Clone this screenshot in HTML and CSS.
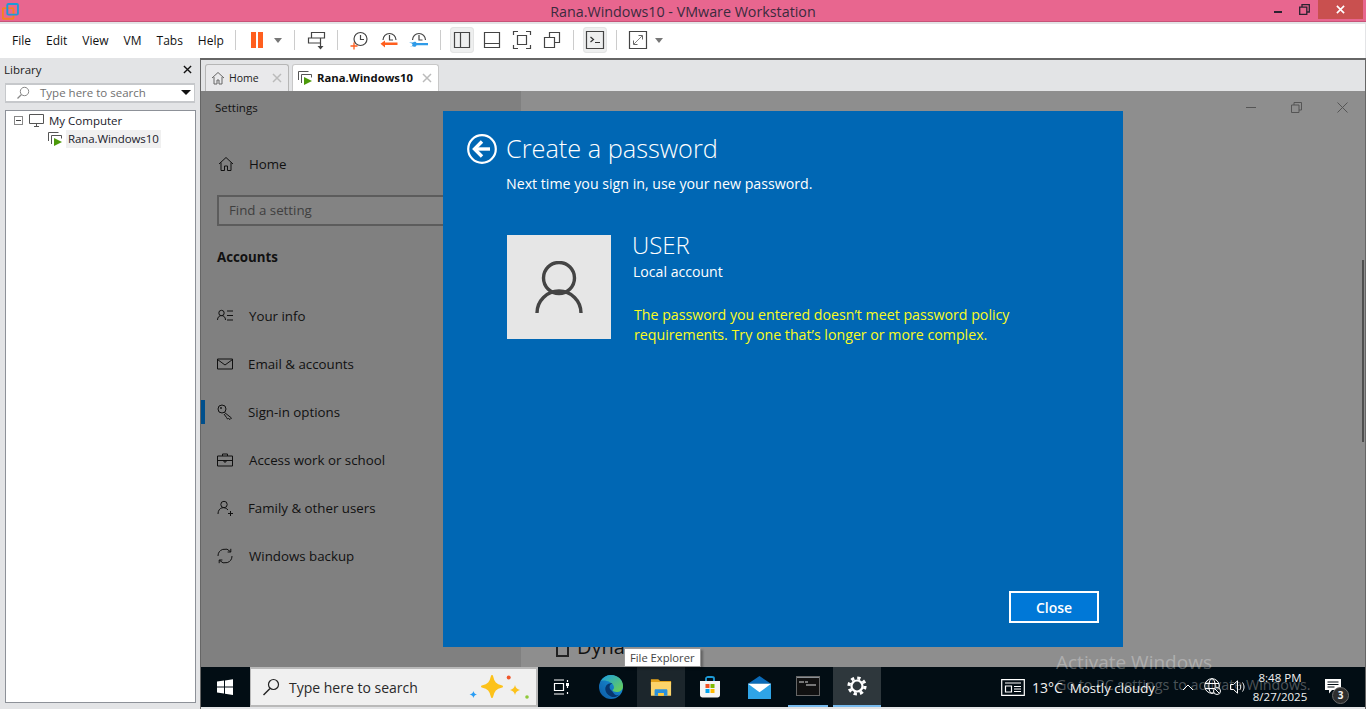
FILE: index.html
```html
<!DOCTYPE html>
<html lang="en">
<head>
<meta charset="utf-8">
<title>Rana.Windows10 - VMware Workstation</title>
<link rel="stylesheet" href="styles.css">
</head>
<body>
<div class="app">
  <header class="titlebar">
    <svg class="app-logo" viewBox="0 0 16 16"><rect x="0.8" y="4.8" width="10" height="10" rx="1" fill="none" stroke="#f58220" stroke-width="1.8"/><rect x="5" y="0.9" width="10" height="10" rx="1" fill="none" stroke="#1d9ad6" stroke-width="1.8"/></svg>
    <div class="title-text">Rana.Windows10 - VMware Workstation</div>
    <div class="win-ctrls">
      <span class="win-min"></span>
      <svg class="win-restore" viewBox="0 0 11 11"><path d="M0.7 3.2h7.1v7.1H0.7z M3 3V0.7h7.3V8H8" fill="none" stroke="#2b2230" stroke-width="1.3"/></svg>
      <div class="win-close"><svg viewBox="0 0 10 10" width="9" height="9"><path d="M1 1l8 8M9 1l-8 8" stroke="#fff" stroke-width="1.8"/></svg></div>
    </div>
  </header>

  <nav class="toolbar">
    <ul class="menu">
      <li>File</li><li>Edit</li><li>View</li><li>VM</li><li>Tabs</li><li>Help</li>
    </ul>
    <span class="sep"></span>
    <span class="tb-btn"><svg viewBox="0 0 24 26"><rect x="6" y="5" width="5" height="16" fill="#ff5f1f"/><rect x="13" y="5" width="5" height="16" fill="#ff5f1f"/></svg></span>
    <span class="tb-arrow"></span>
    <span class="sep sep--wide"></span>
    <span class="tb-btn"><svg viewBox="0 0 24 26"><path d="M7.500 5.500h13v5.500h-13z M4.500 11h12v5h-12z" fill="none" stroke="#444" stroke-width="1.200"/><path d="M16.500 16v4" stroke="#444" stroke-width="1.200"/><path d="M13.500 19h6l-3 3.500z" fill="#444"/></svg></span>
    <span class="sep"></span>
    <span class="tb-btn"><svg viewBox="0 0 24 26"><circle cx="13.500" cy="12" r="6.500" fill="none" stroke="#444" stroke-width="1.200"/><path d="M13.500 8v4.500h3.500" fill="none" stroke="#444" stroke-width="1.200"/><path d="M3.500 19h7M7 15.500v7" stroke="#ff5f1f" stroke-width="1.300"/></svg></span>
    <span class="tb-btn"><svg viewBox="0 0 24 26"><path d="M6 13a6.500 6.500 0 1 1 13 0" fill="none" stroke="#444" stroke-width="1.200"/><path d="M12.500 8v5h3.500" fill="none" stroke="#444" stroke-width="1.200"/><path d="M8 15.500h12.500v2.500H8v2.500l-4.500-3.700 4.500-3.300z" fill="#ff5f1f"/></svg></span>
    <span class="tb-btn"><svg viewBox="0 0 24 26"><path d="M5.500 13a6.500 6.500 0 1 1 13 0" fill="none" stroke="#444" stroke-width="1.200"/><path d="M12 8v5h3.500" fill="none" stroke="#444" stroke-width="1.200"/><path d="M2 15.500h4c1-1 3-1 3.500.5h11.500v2.200H9.500c-.5 1.800-2.500 2-3.500 1H3c1 0 2.500 0 2.500-1.600C5.500 16.500 4 16 2 15.500z" fill="#2f9be8"/></svg></span>
    <span class="sep"></span>
    <span class="tb-btn tb-btn--on"><svg viewBox="0 0 24 26"><path d="M4.500 5.500h15v15h-15z M10.500 5.500v15" fill="none" stroke="#444" stroke-width="1.200"/></svg></span>
    <span class="tb-btn"><svg viewBox="0 0 24 26"><path d="M4.500 5.500h15v15h-15z M4.500 16.500h15" fill="none" stroke="#444" stroke-width="1.200"/></svg></span>
    <span class="tb-btn"><svg viewBox="0 0 24 26"><path d="M3.500 8V4.500H8 M16 4.500h4.500V8 M20.500 18v3.500H16 M8 21.500H3.500V18 M7.500 8.500h9v9h-9z" fill="none" stroke="#444" stroke-width="1.200"/></svg></span>
    <span class="tb-btn"><svg viewBox="0 0 24 26"><path d="M4.500 10.500h10v10h-10z M9.500 10V5.500h10v10H15" fill="none" stroke="#444" stroke-width="1.200"/></svg></span>
    <span class="sep"></span>
    <span class="tb-btn tb-btn--on"><svg viewBox="0 0 24 26"><path d="M3.500 4.500h17v17h-17z" fill="none" stroke="#444" stroke-width="1.200"/><path d="M7.500 10l3 2.500-3 2.500" fill="none" stroke="#333" stroke-width="1.200"/><path d="M12 15.500h5" stroke="#333" stroke-width="1.200"/></svg></span>
    <span class="sep"></span>
    <span class="tb-btn"><svg viewBox="0 0 24 26"><path d="M3.500 4.500h17v17h-17z" fill="none" stroke="#444" stroke-width="1.200"/><path d="M8 17l8-8" stroke="#888" stroke-width="1"/><path d="M12.500 8.500h4v4 M7.500 13.500v4h4" fill="none" stroke="#666" stroke-width="1"/></svg></span>
    <span class="tb-arrow"></span>
  </nav>

  <div class="workspace">
    <aside class="library">
      <div class="library-head"><span>Library</span><svg viewBox="0 0 10 10" width="9" height="9"><path d="M1 1l8 8M9 1l-8 8" stroke="#111" stroke-width="1.500"/></svg></div>
      <div class="lib-search">
        <svg viewBox="0 0 14 14" width="14" height="14"><circle cx="8.500" cy="5.500" r="4.200" fill="none" stroke="#888" stroke-width="1"/><path d="M5.500 8.500L1.500 12.500" stroke="#888" stroke-width="1.200"/></svg>
        <span class="lib-search-text">Type here to search</span>
        <span class="lib-search-arrow"></span>
      </div>
      <div class="tree">
        <div class="tree-row">
          <span class="expander"></span>
          <svg class="tree-pc" viewBox="0 0 15 13"><path d="M.5.500h14v9H.5z M5 12.500h5 M7.500 9.500v3" fill="none" stroke="#555" stroke-width="1"/></svg>
          <span>My Computer</span>
        </div>
        <div class="tree-row tree-row--vm">
          <svg class="tree-vm" viewBox="0 0 15 14"><path d="M.5 9V.500h10M3.500 12V3.500h10v3" fill="none" stroke="#555" stroke-width="1"/><path d="M6 6l8 4-8 4z" fill="#4c9a0a"/></svg>
          <span class="tree-vm-label">Rana.Windows10</span>
        </div>
      </div>
    </aside>

    <main class="vm-panel">
      <div class="tabs">
        <div class="tab">
          <svg viewBox="0 0 14 14" width="14" height="14"><path d="M1 7l6-5.500L13 7M3 6v7h3V9h2v4h3V6" fill="none" stroke="#666" stroke-width="1"/></svg>
          <span class="tab-label">Home</span>
          <svg class="tab-x" viewBox="0 0 10 10"><path d="M1 1l8 8M9 1l-8 8" stroke="#bbb" stroke-width="1.500"/></svg>
        </div>
        <div class="tab tab--active">
          <svg viewBox="0 0 15 14" width="15" height="14"><path d="M.5 9V.500h10M3.500 12V3.500h10v3" fill="none" stroke="#555" stroke-width="1"/><path d="M6 6l8 4-8 4z" fill="#4c9a0a"/></svg>
          <span class="tab-label tab-label--bold">Rana.Windows10</span>
          <svg class="tab-x" viewBox="0 0 10 10"><path d="M1 1l8 8M9 1l-8 8" stroke="#bbb" stroke-width="1.500"/></svg>
        </div>
      </div>

      <div class="screen">
        <div class="settings">
          <section class="set-nav">
            <div class="set-title">Settings</div>
            <div class="set-item set-item--home">
              <svg viewBox="0 0 16 16"><path d="M1 8l7-6.500L15 8M3 6.500V14.500h3.500V10h3v4.500H13V6.500" fill="none" stroke="#111" stroke-width="1"/></svg>
              <span>Home</span>
            </div>
            <div class="set-search">Find a setting</div>
            <div class="set-heading">Accounts</div>
            <div class="set-item">
              <svg viewBox="0 0 16 16"><circle cx="4.500" cy="5" r="2.700" fill="none" stroke="#111" stroke-width="1"/><path d="M.5 12c0-6 8-6 8 0 M10 3h6M10 7.500h6M10 12h6" fill="none" stroke="#111" stroke-width="1"/></svg>
              <span>Your info</span>
            </div>
            <div class="set-item set-item--tight">
              <svg viewBox="0 0 16 16"><path d="M.5 3h15v10H.5z M.5 3.500L8 9l7.500-5.500" fill="none" stroke="#111" stroke-width="1"/></svg>
              <span>Email &amp; accounts</span>
            </div>
            <div class="set-item set-item--tight set-item--current">
              <svg viewBox="0 0 16 16"><circle cx="5" cy="5" r="4" fill="none" stroke="#111" stroke-width="1"/><path d="M7.500 8.500l7 5.500-1.500 1.500-1.500-1-1 .5-1-1.500L7 10" fill="none" stroke="#111" stroke-width="1"/><circle cx="4" cy="4" r=".9" fill="#111"/></svg>
              <span>Sign-in options</span>
            </div>
            <div class="set-item">
              <svg viewBox="0 0 16 16"><path d="M.5 4h15v10H.5z M5.500 4V2h5v2 M.5 8.500h15 M7 8v2h2V8" fill="none" stroke="#111" stroke-width="1"/></svg>
              <span>Access work or school</span>
            </div>
            <div class="set-item set-item--tight">
              <svg viewBox="0 0 16 16"><circle cx="7" cy="4.500" r="3.200" fill="none" stroke="#111" stroke-width="1"/><path d="M1 14c0-7 7-8 10-4 M11 13.500h5M13.500 11v5" fill="none" stroke="#111" stroke-width="1"/></svg>
              <span>Family &amp; other users</span>
            </div>
            <div class="set-item">
              <svg viewBox="0 0 16 16"><path d="M1 8a7 7 0 0 1 12.500-4.300 M15 8a7 7 0 0 1-12.500 4.300 M13.800 .8v3.200h-3.200 M2.200 15.200V12h3.200" fill="none" stroke="#111" stroke-width="1"/></svg>
              <span>Windows backup</span>
            </div>
          </section>
          <section class="set-main">
            <div class="set-ctrls">
              <span class="set-min"></span>
              <svg viewBox="0 0 11 11" width="11" height="11"><path d="M.5 3h7.500v7.500H.5z M3 3V.5h7.500V8H8" fill="none" stroke="#555" stroke-width="1"/></svg>
              <svg viewBox="0 0 11 11" width="11" height="11"><path d="M.5.500l10 10M10.500.500l-10 10" stroke="#555" stroke-width="1"/></svg>
            </div>
            <div class="dyn-row"><span class="dyn-box"></span><span class="dyn-text">Dyna</span></div>
          </section>
          <span class="set-scroll"></span>
        </div>

        <footer class="taskbar">
          <div class="start"><svg viewBox="0 0 16 16" width="16" height="16"><path d="M0 2.600L7 1.600V7.600H0z M8 1.400L16 .2V7.600H8z M0 8.500H7V14.500L0 13.500z M8 8.500h8V16L8 14.700z" fill="#fff"/></svg></div>
          <div class="task-search">
            <svg viewBox="0 0 18 18" width="18" height="18"><circle cx="11.500" cy="6.500" r="5" fill="none" stroke="#222" stroke-width="1.200"/><path d="M8 10.500L1.500 17" stroke="#222" stroke-width="1.400"/></svg>
            <span class="task-search-text">Type here to search</span>
            <svg class="sparkle" viewBox="0 0 62 26" width="62" height="26"><path d="M24 2c1.500 7 3.500 9 10 10.500-6.500 1.500-8.500 3.500-10 10.500-1.500-7-3.500-9-10-10.500 6.500-1.500 8.500-3.500 10-10.500z" fill="#fcc21b" stroke="#fcc21b" stroke-width="2" stroke-linejoin="round"/><path d="M47 11c.7 3 2 4.300 5 5-3 .7-4.300 2-5 5-.7-3-2-4.300-5-5 3-.7 4.300-2 5-5z" fill="#fcc21b"/><path d="M5.500 17c.5 2 1 3 3.500 3.500-2.500.5-3 1.500-3.500 3.500-.5-2-1.500-3-4-3.500 2.500-.5 3.500-1.500 4-3.500z" fill="#2a9df4"/><circle cx="40.700" cy="3.500" r="2" fill="#f0562b"/><circle cx="59" cy="23" r="1.800" fill="#8fc93a"/></svg>
          </div>
          <div class="task-apps">
            <span class="task-app task-app--view"><svg viewBox="0 0 16 16" width="16" height="16"><path d="M1 1h10 M1 15h10 M1.500 4.500h9v7h-9z M14.500 1v2 M14.500 7v2 M14.500 13v2" fill="none" stroke="#fff" stroke-width="1.200"/><rect x="13" y="4" width="3" height="3" fill="#fff"/></svg></span>
            <span class="task-app task-app--edge"><svg viewBox="0 0 24 24" width="24" height="24"><defs><linearGradient id="eb" x1="0" y1="1" x2="1" y2="0"><stop offset="0" stop-color="#0c59a4"/><stop offset="1" stop-color="#1b9de2"/></linearGradient><linearGradient id="eg" x1="0" y1="0" x2="1" y2="1"><stop offset="0" stop-color="#1b9de2"/><stop offset="1" stop-color="#6ed34a"/></linearGradient></defs><circle cx="12" cy="12" r="12" fill="url(#eb)"/><path d="M2 6C5 1 9 0 12 0c7 0 12 5 12 11 0 4-3 6-6.500 6-2 0-4-.8-4-2 1.500-1 2-2.500 1-4.500C13 7 6 4.500 2 6z" fill="url(#eg)"/><path d="M13 16c-3.500-2-3-7 .5-7.500-4.500-1-8 2.500-7 7 1 4 6 8 11 6 1-.4 2-1 2.800-1.900-3 1.500-5 .3-7.300-3.600z" fill="#07366f"/></svg></span>
            <span class="task-app task-app--explorer"><svg viewBox="0 0 24 20" width="22" height="19"><path d="M1 1h8l2 2h12v4H1z" fill="#e3a21a"/><path d="M1 4h22v15H1z" fill="#fcd46a"/><path d="M5 13.500c0-1 .5-1.500 1.500-1.500h11c1 0 1.500.5 1.500 1.500V19h-4v-3H9v3H5z" fill="#2b90d9"/><path d="M9 16h6v3H9z" fill="#ffc93a"/></svg></span>
            <span class="task-app task-app--store"><svg viewBox="0 0 22 22" width="22" height="22"><path d="M7 6V2.500C7 1.500 8 1 9 1h4c1 0 2 .5 2 1.500V6" fill="none" stroke="#1d9ad6" stroke-width="1.800"/><path d="M1 5h20v14c0 1.500-1 2.500-2.500 2.500h-15C2 21.500 1 20.500 1 19z" fill="#f4f4f4"/><rect x="6.500" y="8" width="4" height="4" fill="#f25022"/><rect x="11.500" y="8" width="4" height="4" fill="#7fba00"/><rect x="6.500" y="13" width="4" height="4" fill="#00a4ef"/><rect x="11.500" y="13" width="4" height="4" fill="#ffb900"/></svg></span>
            <span class="task-app task-app--mail"><svg viewBox="0 0 26 24" width="25" height="23"><path d="M13 0L1 8h24z" fill="#0a6ab8"/><path d="M1 8h24v16H1z" fill="#2fa4e7"/><path d="M1 8h24L13 17z" fill="#fff"/></svg></span>
            <span class="task-app task-app--cmd"><svg viewBox="0 0 24 20" width="24" height="20"><rect width="24" height="20" fill="#111"/><rect width="24" height="2" fill="#8a8f94"/><rect x=".5" y=".5" width="23" height="19" fill="none" stroke="#666"/><path d="M3 6h5M9 6h3M10 9h10" stroke="#ddd" stroke-width="1.200"/></svg></span>
            <span class="task-app task-app--gear"><svg viewBox="0 0 20 20" width="20" height="20"><circle cx="10" cy="10" r="5.500" fill="none" stroke="#fff" stroke-width="2.200"/><circle cx="10" cy="10" r="8" fill="none" stroke="#fff" stroke-width="3.200" stroke-dasharray="3.280 3"/></svg></span>
          </div>
          <div class="tray">
            <svg class="tray-news" viewBox="0 0 24 17" width="24" height="17"><path d="M.7.700h22.600v15.600H.7z M4 4h16" fill="none" stroke="#fff" stroke-width="1.200"/><path d="M4.500 7h6v6h-6z" fill="none" stroke="#fff" stroke-width="1.200"/><path d="M13 7.500h7M13 10h7M13 12.500h7" stroke="#fff" stroke-width="1.200"/></svg>
            <span class="tray-weather"><span class="tray-temp">13°C</span>Mostly cloudy</span>
            <svg class="tray-chevron" viewBox="0 0 12 7" width="12" height="7"><path d="M1 6l5-5 5 5" fill="none" stroke="#fff" stroke-width="1"/></svg>
            <svg class="tray-globe" viewBox="0 0 18 18" width="18" height="18"><circle cx="8" cy="8" r="7.300" fill="none" stroke="#fff" stroke-width="1"/><ellipse cx="8" cy="8" rx="3.200" ry="7.300" fill="none" stroke="#fff" stroke-width="1"/><path d="M1 5.500h14M1 10.500h14" stroke="#fff" stroke-width="1"/><circle cx="13" cy="13" r="3.500" fill="#020d14" stroke="#fff" stroke-width="1"/><path d="M11 11l4 4" stroke="#fff" stroke-width="1"/></svg>
            <svg class="tray-sound" viewBox="0 0 16 14" width="16" height="14"><path d="M.5 4.500h3L7.500.8v12.400L3.500 9.500h-3z M10 4.500c1 1.500 1 3.500 0 5 M12.500 2.500c2 3 2 6 0 9" fill="none" stroke="#fff" stroke-width="1"/></svg>
            <div class="tray-clock"><span>8:48 PM</span><span>8/27/2025</span></div>
            <div class="tray-notify">
              <svg viewBox="0 0 16 15" width="16" height="15"><path d="M0 0h16v11H7l-3 3.500V11H0z" fill="#fff"/><path d="M2.500 3h11M2.500 5.500h11M2.500 8h7" stroke="#020d14" stroke-width="1"/></svg>
              <span class="tray-badge">3</span>
            </div>
          </div>
        </footer>

        <div class="dialog">
          <div class="dlg-head">
            <svg viewBox="0 0 30 30" width="30" height="30"><circle cx="15" cy="15" r="13.800" fill="none" stroke="#fff" stroke-width="2.200"/><path d="M7 15h16" stroke="#fff" stroke-width="3.400"/><path d="M15 7.500L7.500 15l7.500 7.500" fill="none" stroke="#fff" stroke-width="3.400"/></svg>
            <h1>Create a password</h1>
          </div>
          <p class="dlg-sub">Next time you sign in, use your new password.</p>
          <div class="dlg-user">
            <div class="avatar"><svg viewBox="0 0 48 53" width="48" height="53"><circle cx="24" cy="17" r="15.500" fill="none" stroke="#444" stroke-width="3.400"/><path d="M2 52A22 22 0 0 1 46 52" fill="none" stroke="#444" stroke-width="3.400"/></svg></div>
            <div class="user-info">
              <div class="user-name">USER</div>
              <div class="user-type">Local account</div>
              <p class="user-error">The password you entered doesn’t meet password policy requirements. Try one that’s longer or more complex.</p>
            </div>
          </div>
          <div class="dlg-foot"><button class="dlg-close">Close</button></div>
        </div>

        <div class="tooltip">File Explorer</div>
        <div class="watermark"><div class="wm-title">Activate Windows</div><div class="wm-sub">Go to PC settings to activate Windows.</div></div>
      </div>
    </main>
  </div>
</div>
</body>
</html>
```
FILE: styles.css
```css
* { box-sizing: border-box; }
html, body { margin: 0; height: 100%; overflow: hidden; }
body { font-family: "Open Sans", "Noto Sans", "Liberation Sans", sans-serif; color: #111; background: #e3e4e6; }
svg { display: block; flex: none; }

.app { width: 1366px; height: 709px; display: flex; flex-direction: column; }

/* Host title bar */
.titlebar { height: 24px; flex: none; background: #e8668f; border-bottom: 2px solid #e3e4e6; box-shadow: inset 0 -1px 0 #c75378; display: flex; align-items: flex-start; position: relative; }
.app-logo { width: 17px; height: 17px; margin: 3px 0 0 2px; }
.title-text { position: absolute; left: 0; right: 0; top: 2px; text-align: center; font-size: 14.300px; line-height: 20px; color: #3b2b3e; }
.win-ctrls { margin-left: auto; display: flex; align-items: flex-start; padding-right: 3px; }
.win-min { width: 8px; height: 2px; background: #2b2230; margin: 11px 0 0 0; }
.win-restore { width: 11px; height: 11px; margin: 4px 0 0 17px; }
.win-close { width: 45px; height: 19px; margin-left: 8px; background: #c9504f; display: flex; align-items: center; justify-content: center; }

/* Toolbar */
.toolbar { height: 34px; flex: none; background: #fff; display: flex; align-items: center; padding: 0 0 2px 12px; margin-right: 1px; }
.menu { list-style: none; width: 217px; margin: 0; padding: 0; display: flex; gap: 15px; font-size: 12px; color: #111; }
.sep { width: 1px; height: 20px; background: #ccc; margin: 0 6px; }
.sep--wide { margin-left: 10px; }
.tb-btn { width: 30px; display: flex; align-items: center; justify-content: center; }
.tb-btn svg { width: 24px; height: 26px; border-radius: 4px; }
.tb-btn--on svg { background: #eeefef; box-shadow: inset 0 0 0 1px #e3e4e4; }
.tb-arrow { width: 12px; height: 26px; display: flex; align-items: center; justify-content: center; }
.tb-arrow::after { content: ""; border-left: 4px solid transparent; border-right: 4px solid transparent; border-top: 5px solid #777; }

/* Workspace */
.workspace { flex: 1; min-height: 0; display: flex; }
.library { width: 200px; flex: none; display: flex; flex-direction: column; padding: 0 4px 6px 5px; }
.library-head { height: 25px; display: flex; align-items: center; justify-content: space-between; font-size: 11.500px; color: #222; margin-left: -1px; padding: 0 4px 2px 0; }
.lib-search { height: 20px; width: 190px; background: #fff; border: 1px solid #c6c8cb; border-width: 2px 1px; display: flex; align-items: center; padding: 0 0 1px 10px; }
.lib-search-text { margin-left: 10px; font-size: 11.500px; color: #707070; }
.lib-search-arrow { margin-left: auto; margin-right: 3px; border-left: 5px solid transparent; border-right: 5px solid transparent; border-top: 5px solid #111; }
.tree { flex: 1; margin-top: 7px; width: 191px; background: #fff; border: 1px solid #8d9198; font-size: 11.500px; color: #1a1a2a; }
.tree-row { height: 18px; display: flex; align-items: center; padding-left: 8px; }
.expander { width: 9px; height: 9px; border: 1px solid #888; position: relative; }
.expander::after { content: ""; position: absolute; left: 1px; right: 1px; top: 3px; height: 1px; background: #444; }
.tree-pc { width: 15px; height: 13px; margin: 0 5px 0 6px; }
.tree-row--vm { padding-left: 42px; margin-top: 1px; }
.tree-vm { width: 15px; height: 14px; }
.tree-vm-label { background: #f0f0f0; margin-left: 3px; padding: 0 2px; line-height: 18px; height: 18px; letter-spacing: -0.100px; }

/* VM panel */
.vm-panel { flex: 1; min-width: 0; display: flex; flex-direction: column; border-top: 2px solid #666; border-left: 1px solid #666; border-right: 1px solid #666; padding-bottom: 2px; }
.tabs { height: 31px; flex: none; display: flex; align-items: flex-end; gap: 3px; padding-left: 4px; }
.tab { height: 27px; background: #e9e9eb; border: 1px solid #b6b6b6; border-bottom: 0; border-radius: 3px 3px 0 0; display: flex; align-items: center; padding: 0 5px 1px; font-size: 10.500px; color: #222; width: 84px; }
.tab--active { background: #fff; border-color: #c8c8c8; width: 147px; }
.tab-label { margin-left: 4px; }
.tab-label--bold { font-size: 11.300px; font-weight: 700; color: #111; }
.tab-x { width: 10px; height: 10px; margin-left: auto; margin-right: 1px; }

/* Guest screen */
.screen { flex: 1; min-height: 0; display: flex; flex-direction: column; position: relative; overflow: hidden; }
.settings { flex: 1; min-height: 0; display: flex; position: relative; }
.set-nav { width: 320px; flex: none; background: #808080; padding-left: 16px; display: flex; flex-direction: column; }
.set-title { height: 34px; margin-left: -2px; padding-bottom: 1px; display: flex; align-items: center; font-size: 11.500px; color: #111; }
.set-item { height: 48px; flex: none; display: flex; align-items: center; font-size: 13.300px; color: #111; position: relative; }
.set-item svg { width: 16px; height: 16px; margin-right: 16px; }
.set-item--home { margin-top: 15px; }
.set-item--home svg { margin-left: 1px; margin-right: 15px; }
.set-item--tight svg { margin-right: 15px; }
.set-item--current::before { content: ""; position: absolute; left: -16px; top: 12px; width: 4px; height: 24px; background: #004f8c; }
.set-search { height: 31px; flex: none; width: 270px; margin-top: 7px; border: 2px solid #5c5c5c; background: #838383; padding: 0 0 2px 10px; display: flex; align-items: center; font-size: 13.300px; color: #3f3f3f; }
.set-heading { height: 48px; flex: none; margin: 7px 0 11px; display: flex; align-items: center; font-size: 13.300px; font-weight: 700; color: #111; }

.set-main { flex: 1; background: #8e8e8e; position: relative; display: flex; flex-direction: column; justify-content: flex-end; padding: 0 0 10px 35px; }
.set-ctrls { position: absolute; top: 11px; right: 17px; display: flex; align-items: center; gap: 35px; }
.set-min { width: 10px; height: 1px; background: #555; }
.set-ctrls svg { width: 11px; height: 11px; }
.dyn-row { display: flex; align-items: flex-end; gap: 8px; }
.dyn-box { width: 13px; height: 13px; flex: none; border: 2px solid #222; }
.dyn-text { font-size: 20px; line-height: 20px; color: #111; }
.set-scroll { position: absolute; right: 1px; top: 169px; width: 2px; height: 182px; background: #4f4f4f; }

/* Taskbar */
.taskbar { height: 40px; flex: none; background: #020d14; display: flex; color: #fff; }
.start { width: 48px; flex: none; display: flex; align-items: center; justify-content: center; }
.task-search { width: 288px; margin-left: 1px; margin-right: -1px; flex: none; background: #f0f0f0; border: 2px solid #b9b9b9; border-width: 2px 2px 2px 1px; display: flex; align-items: center; padding-left: 11px; color: #222; }
.task-search-text { margin-left: 9px; font-size: 14px; color: #2a2a2a; }
.sparkle { margin-left: auto; margin-right: 6px; }
.task-apps { display: flex; }
.task-app { height: 40px; display: flex; align-items: center; justify-content: center; flex: none; width: 48px; }
.task-app--edge { width: 52px; }
.task-app--explorer { background: #1c262c; }
.task-app--store { width: 50px; }
.task-app--cmd { width: 40px; margin-left: 5px; border-bottom: 2px solid #76b9ed; }
.task-app--gear { background: #2e373c; border-bottom: 2px solid #76b9ed; margin-left: 5px; }
.tray { flex: 1; display: flex; align-items: center; padding-left: 120px; font-size: 13.300px; color: #f2f2f2; position: relative; }
.tray-news { margin-right: 7px; }
.tray-weather { width: 150px; white-space: nowrap; }
.tray-temp { font-size: 14px; margin-right: 7px; }
.tray-chevron { margin-right: 10px; }
.tray-globe { margin-right: 8px; }
.tray-sound { margin-right: 4px; }
.tray-clock { display: flex; flex-direction: column; align-items: center; width: 60px; font-size: 11.500px; line-height: 19px; }
.tray-notify { position: relative; margin: -2px 0 0 15px; }
.tray-badge { position: absolute; left: 7px; top: 8px; width: 17px; height: 17px; border-radius: 50%; background: #2e2e2e; border: 1px solid #6a6a6a; font-size: 10px; line-height: 15px; text-align: center; font-weight: 700; }

/* Dialog */
.dialog { position: absolute; left: 242px; top: 20px; width: 680px; height: 536px; background: #0067b4; color: #fff; display: flex; flex-direction: column; padding: 23px 24px 24px; }
.dlg-head { display: flex; align-items: center; gap: 9px; height: 30px; }
.dlg-head h1 { margin: 0 0 2px; font-size: 25.300px; font-weight: 300; line-height: 28px; color: #fff; }
.dlg-sub { margin: 10px 0 0 39px; font-size: 14.200px; line-height: 20px; }
.dlg-user { display: flex; margin: 41px 0 0 40px; }
.avatar { width: 104px; height: 104px; background: #e6e6e6; display: flex; align-items: center; justify-content: center; }
.user-info { margin-left: 22px; width: 420px; }
.user-name { font-size: 24px; font-weight: 300; line-height: 20px; margin-left: -1px; }
.user-type { margin-top: 7px; font-size: 14.100px; line-height: 20px; }
.user-error { margin: 23px 0 0 1px; font-size: 14.200px; line-height: 20px; color: #fbfb1e; }
.dlg-foot { margin-top: auto; display: flex; justify-content: flex-end; }
.dlg-close { width: 90px; height: 32px; background: #0078d7; border: 2px solid #fff; color: #fff; font: 600 14px "Open Sans", sans-serif; padding: 0; }

.tooltip { position: absolute; left: 423px; top: 557px; height: 19px; padding: 0 5px; background: #fff; border: 1px solid #999; box-shadow: 2px 2px 2px rgba(0,0,0,.3); font-size: 11.200px; line-height: 17px; color: #444; white-space: nowrap; }
.watermark { position: absolute; left: 855px; top: 559px; color: rgba(255,255,255,.3); white-space: nowrap; pointer-events: none; }
.wm-title { font-size: 19px; line-height: 24px; }
.wm-sub { font-size: 14.300px; line-height: 20px; margin-top: 1px; }
```
